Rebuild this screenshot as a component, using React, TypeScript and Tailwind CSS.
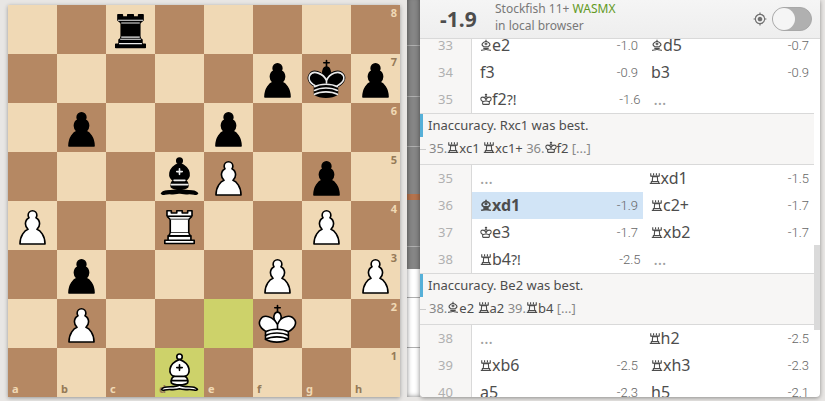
import React, { useState } from 'react';
import { MdMyLocation } from 'react-icons/md';

type PieceCode = 'bR' | 'bP' | 'bK' | 'bB' | 'wP' | 'wR' | 'wK' | 'wB';

interface Move {
  san: string;
  score?: string;
  mark?: string;
  active?: boolean;
}

interface Turn {
  index: number;
  white: Move | null;
  black: Move | null;
}

interface Variation {
  label: string;
  parts: { text: string; move?: boolean }[];
}

const files = ['a', 'b', 'c', 'd', 'e', 'f', 'g', 'h'];
const ranks = [8, 7, 6, 5, 4, 3, 2, 1];

const position: Record<string, PieceCode> = {
  c8: 'bR',
  f7: 'bP',
  g7: 'bK',
  h7: 'bP',
  b6: 'bP',
  e6: 'bP',
  d5: 'bB',
  e5: 'wP',
  g5: 'bP',
  a4: 'wP',
  d4: 'wR',
  g4: 'wP',
  b3: 'bP',
  f3: 'wP',
  h3: 'wP',
  b2: 'wP',
  f2: 'wK',
  d1: 'wB',
};

const lastMove = ['e2', 'd1'];

const firstTurns: Turn[] = [
  { index: 33, white: { san: 'Be2', score: '-1.0' }, black: { san: 'Bd5', score: '-0.7' } },
  { index: 34, white: { san: 'f3', score: '-0.9' }, black: { san: 'b3', score: '-0.9' } },
  { index: 35, white: { san: 'Kf2', mark: '?!', score: '-1.6' }, black: null },
];

const middleTurns: Turn[] = [
  { index: 35, white: null, black: { san: 'Rxd1', score: '-1.5' } },
  { index: 36, white: { san: 'Bxd1', score: '-1.9', active: true }, black: { san: 'Rc2+', score: '-1.7' } },
  { index: 37, white: { san: 'Ke3', score: '-1.7' }, black: { san: 'Rxb2', score: '-1.7' } },
  { index: 38, white: { san: 'Rb4', mark: '?!', score: '-2.5' }, black: null },
];

const lastTurns: Turn[] = [
  { index: 38, white: null, black: { san: 'Rh2', score: '-2.5' } },
  { index: 39, white: { san: 'Rxb6', score: '-2.5' }, black: { san: 'Rxh3', score: '-2.3' } },
  { index: 40, white: { san: 'a5', score: '-2.3' }, black: { san: 'h5', score: '-2.1' } },
];

const rookLine: Variation = {
  label: 'Inaccuracy. Rxc1 was best.',
  parts: [
    { text: '35.' },
    { text: 'Rxc1', move: true },
    { text: ' ' },
    { text: 'Rxc1+', move: true },
    { text: ' 36.' },
    { text: 'Kf2', move: true },
    { text: ' [...]' },
  ],
};

const bishopLine: Variation = {
  label: 'Inaccuracy. Be2 was best.',
  parts: [
    { text: '38.' },
    { text: 'Be2', move: true },
    { text: ' ' },
    { text: 'Ra2', move: true },
    { text: ' 39.' },
    { text: 'Rb4', move: true },
    { text: ' [...]' },
  ],
};

const Piece: React.FC<{ code: PieceCode }> = ({ code }) => {
  const black = code[0] === 'b';
  const fill = black ? '#000' : '#fff';
  const detail = black ? '#ececec' : '#000';

  return (
    <svg
      viewBox="0 0 45 45"
      className="h-full w-full"
      fill={fill}
      stroke="#000"
      strokeWidth="1.5"
      strokeLinecap="round"
      strokeLinejoin="round"
    >
      {code[1] === 'P' && (
        <path d="M22.5 9c-2.21 0-4 1.79-4 4 0 .89.29 1.71.78 2.38C17.33 16.5 16 18.59 16 21c0 2.03.94 3.84 2.41 5.03-3 1.06-7.41 5.55-7.41 13.47h23c0-7.92-4.41-12.41-7.41-13.47 1.47-1.19 2.41-3 2.41-5.03 0-2.41-1.33-4.5-3.28-5.62.49-.67.78-1.49.78-2.38 0-2.21-1.79-4-4-4z" />
      )}

      {code === 'wR' && (
        <g strokeLinecap="butt">
          <path d="M9 39h27v-3H9v3zM12 36v-4h21v4H12zM11 14V9h4v2h5V9h5v2h5V9h4v5" />
          <path d="M34 14l-3 3H14l-3-3" />
          <path d="M31 17v12.5H14V17" />
          <path d="M31 29.5l1.5 2.5h-20l1.5-2.5" />
          <path d="M11 14h23" fill="none" />
        </g>
      )}

      {code === 'bR' && (
        <g strokeLinecap="butt">
          <path d="M9 39h27v-3H9v3zM12.5 32l1.5-2.5h17l1.5 2.5h-20zM12 36v-4h21v4H12z" />
          <path d="M14 29.5v-13h17v13H14z" />
          <path d="M14 16.5L11 14h23l-3 2.5H14zM11 14V9h4v2h5V9h5v2h5V9h4v5H11z" />
          <path d="M12 35.5h21M13 31.5h19M14 29.5h17M14 16.5h17M11 14h23" fill="none" stroke={detail} strokeWidth="1" />
        </g>
      )}

      {code[1] === 'B' && (
        <>
          <path d="M9 36c3.39-.97 10.11.43 13.5-2 3.39 2.43 10.11 1.03 13.5 2 0 0 1.65.54 3 2-.68.97-1.65.99-3 .5-3.39-.97-10.11.46-13.5-1-3.39 1.46-10.11.03-13.5 1-1.354.49-2.323.47-3-.5 1.354-1.94 3-2 3-2z" />
          <path d="M15 32c2.5 2.5 12.5 2.5 15 0 .5-1.5 0-2 0-2 0-2.5-2.5-4-2.5-4 5.5-1.5 6-11.5-5-15.5-11 4-10.5 14-5 15.5 0 0-2.5 1.5-2.5 4 0 0-.5.5 0 2z" />
          <path d="M25 8a2.5 2.5 0 1 1-5 0 2.5 2.5 0 1 1 5 0z" />
          <path d="M17.5 26h10M15 30h15m-7.5-14.5v5M20 18h5" fill="none" stroke={detail} />
        </>
      )}

      {code[1] === 'K' && (
        <>
          <path d="M22.5 11.63V6M20 8h5" fill="none" />
          <path d="M22.5 25s4.5-7.5 3-10.5c0 0-1-2.5-3-2.5s-3 2.5-3 2.5c-1.5 3 3 10.5 3 10.5" />
          <path d="M11.5 37c5.5 3.5 15.5 3.5 21 0v-7s9-4.5 6-10.5c-4-6.5-13.5-3.5-16 4V27v-3.5c-3.5-7.5-13-10.5-16-4-3 6 5 10 5 10V37z" />
          {black && (
            <path
              d="M32 29.5s8.5-4 6.03-9.65C34.15 14 25 18 22.5 24.5l.01 2.1-.01-2.1C20 18 9.906 14 6.997 19.85c-2.497 5.65 4.853 9 4.853 9"
              fill="none"
              stroke={detail}
            />
          )}
          <path
            d="M11.5 30c5.5-3 15.5-3 21 0m-21 3.5c5.5-3 15.5-3 21 0m-21 3.5c5.5-3 15.5-3 21 0"
            fill="none"
            stroke={detail}
          />
        </>
      )}
    </svg>
  );
};

// Simplified outlines that stay readable at text size
const figurines: Record<string, string> = {
  R: 'M6 38h33M11 37v-5h23v5M14 31l1-14h15l1 14M9 6v9h27V6M18 6v6M27 6v6M12 16h21',
  B: 'M7 38c5-2 11 0 15.5-4 4.5 4 10.5 2 15.5 4M14 32h17M14 27h17M15 26c-9-5-5-13 7.5-17 12.5 4 16.500 12 7.500 17M22.5 13v9M18 17.5h9M22.5 4v4',
  K: 'M22.5 4v8M19 7h7M12 38h21M12 38V29C3 24 5 15 12 15c6 0 9 4 10.5 9C24 19 27 15 33 15c7 0 9 9 0 14v9M12 30c6-3 15-3 21 0M22.5 24c-5-7-4-11 0-11s5 4 0 11',
};

const San: React.FC<{ san: string; bold?: boolean }> = ({ san, bold }) => {
  const figurine = figurines[san[0]];
  if (!figurine) return <>{san}</>;
  return (
    <>
      <svg
        viewBox="4 2 37 38"
        className="inline size-3 align-baseline"
        fill="none"
        stroke="currentColor"
        strokeWidth={bold ? 5 : 3.5}
        strokeLinejoin="round"
        role="img"
        aria-label={san[0]}
      >
        <path d={figurine} />
      </svg>
      {san.slice(1)}
    </>
  );
};

const Board: React.FC = () => (
  <div className="grid aspect-square grid-cols-8 shadow-[0_1px_4px_rgba(0,0,0,0.35)]">
    {ranks.map((rank, r) =>
      files.map((file, f) => {
        const key = `${file}${rank}`;
        const light = (r + f) % 2 === 0;
        const colour = lastMove.includes(key) ? 'bg-[#cdd26a]' : light ? 'bg-[#f0d9b5]' : 'bg-[#b58863]';
        const coord = light ? 'text-[#957a58]' : 'text-[#f0d9b5]';
        return (
          <div key={key} className={`relative aspect-square ${colour}`}>
            {file === 'h' && (
              <span className={`absolute top-0.5 right-[3px] text-[11px] leading-3 font-bold ${coord}`}>{rank}</span>
            )}
            {rank === 1 && (
              <span className={`absolute bottom-0.5 left-1 text-[11px] leading-3 font-bold ${coord}`}>{file}</span>
            )}
            {position[key] && (
              <div className="absolute inset-0">
                <Piece code={position[key]} />
              </div>
            )}
          </div>
        );
      })
    )}
  </div>
);

const Gauge: React.FC = () => (
  <div className="relative -mt-1 ml-[7px] flex flex-col overflow-hidden bg-white">
    <div className="absolute inset-x-0 top-0 h-[68%] bg-[#868686]" />
    {ranks.map((n) => (
      <div key={n} className={`relative flex-1 ${n === 1 ? '' : 'border-b border-[#b0b0b0]'}`} />
    ))}
    <div className="absolute inset-x-0 top-1/2 h-1.5 -translate-y-1/2 bg-[#b5734d]" />
    <div className="absolute inset-0 shadow-[inset_0_0_5px_rgba(0,0,0,0.5)]" />
  </div>
);

const MoveCell: React.FC<{ move: Move | null }> = ({ move }) => {
  if (!move) {
    return <span className="flex-1 pl-2 text-[#a0a0a0]">...</span>;
  }
  return (
    <button
      className={`flex flex-1 items-center justify-between pr-[5px] pl-2 text-left ${
        move.active ? 'bg-[#d1e4f6]' : 'hover:bg-[#e8f1fa]'
      }`}
    >
      <span className={move.active ? 'font-bold' : ''}>
        <San san={move.san} bold={move.active} />
        {move.mark && <span className="text-sm">{move.mark}</span>}
      </span>
      <span className="font-[Roboto] text-[13px] font-light text-[#666]">{move.score}</span>
    </button>
  );
};

const TurnRow: React.FC<{ turn: Turn }> = ({ turn }) => (
  <div className="flex h-[27px] text-base leading-[27px] text-[#4d4d4d]">
    <span className="w-[52px] border-r border-[#d9d9d9] bg-[#f7f6f5] text-center text-[13px] leading-[27px] text-[#b0b0b0]">
      {turn.index}
    </span>
    <MoveCell move={turn.white} />
    <MoveCell move={turn.black} />
  </div>
);

const Interrupt: React.FC<{ variation: Variation }> = ({ variation }) => (
  <div className="h-[52px] border-y border-[#d9d9d9] bg-[#f7f6f5] text-[13px] text-[#4d4d4d]">
    <p className="h-[23px] border-l-[3px] border-[#56b0d8] pl-[5px] leading-[23px]">{variation.label}</p>
    <div className="flex h-6 items-center">
      <span className="mr-[3px] w-1.5 border-t border-[#ccc]" />
      <p className="whitespace-pre text-[#888]">
        {variation.parts.map((part, i) => (
          <span key={i} className={part.move ? 'text-[#4d4d4d]' : ''}>
            {part.move ? <San san={part.text} /> : part.text}
          </span>
        ))}
      </p>
    </div>
  </div>
);

export default function App() {
  const [engineOn, setEngineOn] = useState(false);

  return (
    <main className="grid h-screen grid-cols-[49fr_20px_50fr] overflow-hidden bg-[#e8e6e4] pr-[5px] pb-1 pl-2 font-['Noto_Sans','DejaVu_Sans',sans-serif]">
      <section aria-label="Board" className="pt-[5px]">
        <Board />
      </section>

      <Gauge />

      <section
        aria-label="Analysis"
        className="flex min-h-0 flex-col overflow-hidden rounded-b-sm bg-white shadow-[0_1px_4px_rgba(0,0,0,0.4)]"
      >
        <header className="flex h-[39px] shrink-0 items-center border-b border-[#d9d9d9] bg-linear-to-b from-[#f5f5f5] to-[#eeeeee] pr-2 pl-5">
          <strong className="w-[55px] text-[21px] leading-8 text-[#4d4d4d]">-1.9</strong>
          <p className="flex-1 pb-1 text-xs leading-[17px] text-[#787878]">
            Stockfish 11+ <span className="text-[#629924]">WASMX</span>
            <br />
            in local browser
          </p>
          <button aria-label="Practice" className="mr-[5px] text-[#707070]">
            <MdMyLocation size={14} />
          </button>
          <label className="flex cursor-pointer">
            <input
              type="checkbox"
              aria-label="Toggle local evaluation"
              checked={engineOn}
              onChange={(e) => setEngineOn(e.target.checked)}
              className="h-6 w-10 appearance-none rounded-full border border-[#a8a8a8] bg-[#b0b0b0] before:block before:size-[22px] before:rounded-full before:bg-[#f5f5f5] checked:bg-[#629924] checked:before:ml-4"
            />
          </label>
        </header>

        <div className="flex min-h-0 flex-1 overflow-hidden">
          <div className="-mt-[7px] min-w-0 flex-1">
            {firstTurns.map((turn) => (
              <TurnRow key={turn.index} turn={turn} />
            ))}
            <Interrupt variation={rookLine} />
            {middleTurns.map((turn) => (
              <TurnRow key={turn.index} turn={turn} />
            ))}
            <Interrupt variation={bishopLine} />
            {lastTurns.map((turn) => (
              <TurnRow key={turn.index} turn={turn} />
            ))}
          </div>
          <div className="flex w-1.5 flex-col">
            <div className="flex-[206]" />
            <div className="flex-[85] bg-[#dadada]" />
            <div className="flex-[67]" />
          </div>
        </div>
      </section>
    </main>
  );
}
